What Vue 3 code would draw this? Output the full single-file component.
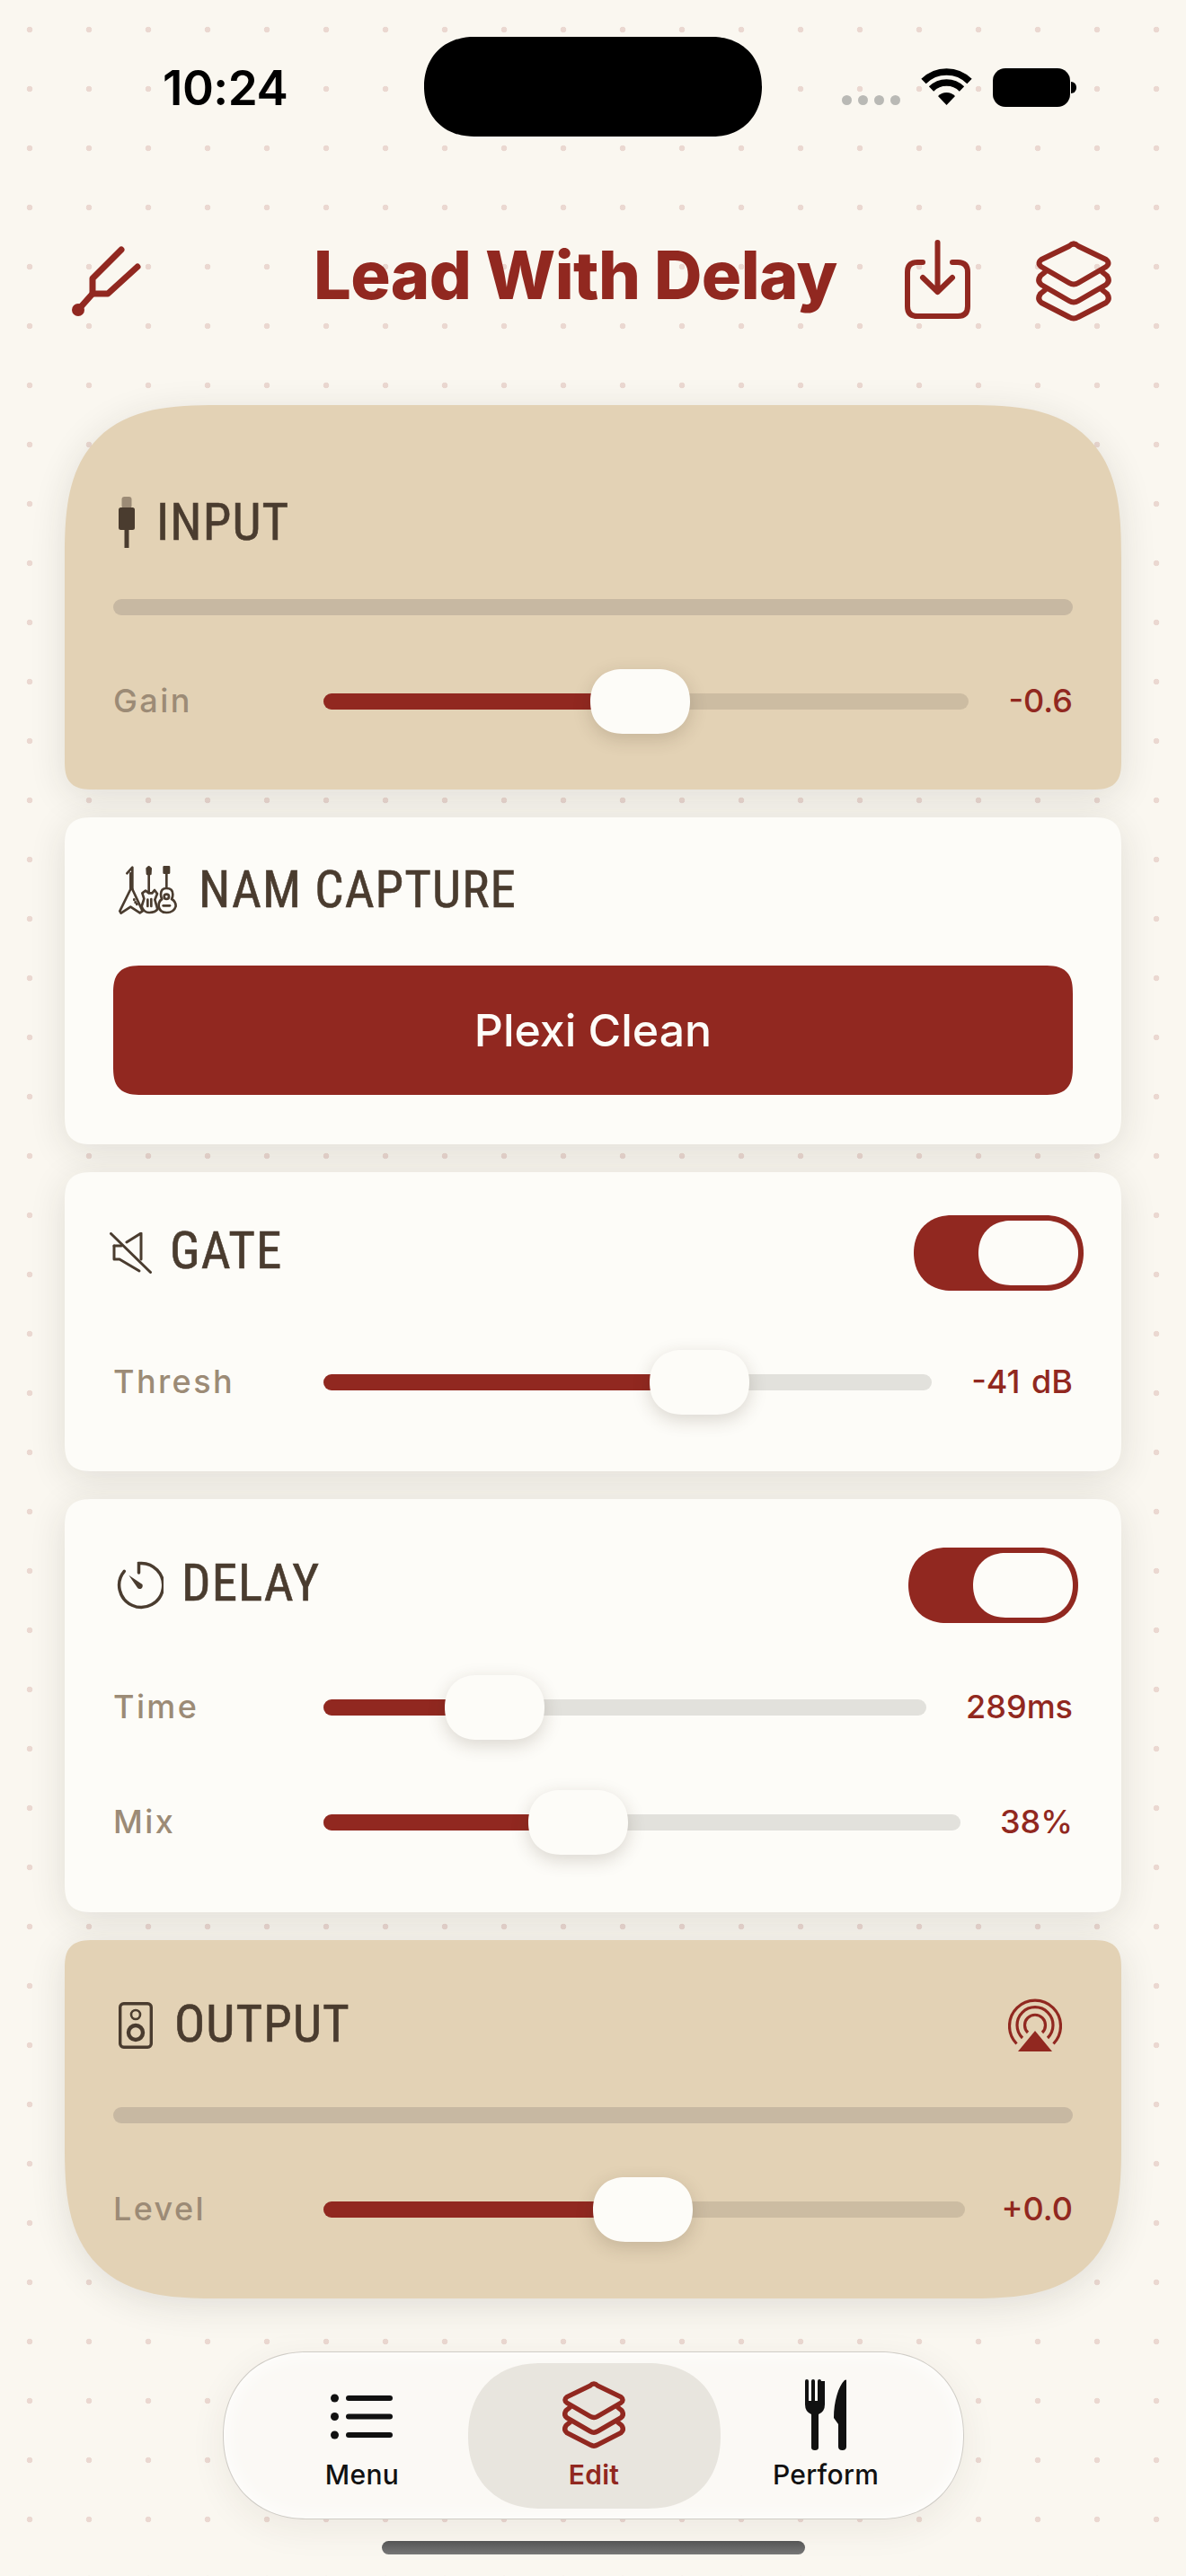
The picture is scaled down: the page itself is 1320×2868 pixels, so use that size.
<script setup>
const layers = [
  'M37 6Q42 1 47 6L78 21Q83 25 78 29L47 47Q42 50 37 47L6 29Q1 25 6 21Z',
  'M10 35L5 39Q1 45 6 49L37 67Q42 70 47 67L78 49Q83 45 79 39L74 35',
  'M10 55L5 59Q1 65 6 69L37 85Q42 88 47 85L78 69Q83 65 79 59L74 55'
]
const sliders = {
  gain: { label: 'Gain', value: '-0.6', thumb: 297 },
  thresh: { label: 'Thresh', value: '-41 dB', thumb: 363 },
  time: { label: 'Time', value: '289ms', thumb: 135 },
  mix: { label: 'Mix', value: '38%', thumb: 228 },
  level: { label: 'Level', value: '+0.0', thumb: 300 }
}
const thumbStyle = (s) => ({ left: s.thumb + 'px' })
const fillStyle = (s) => ({ width: s.thumb + 20 + 'px' })
</script>

<template>
  <div class="page">
    <div class="status">
      <span class="time">10:24</span>
      <div class="island"></div>
      <div class="signal"><i></i><i></i><i></i><i></i></div>
      <svg class="wifi" width="57" height="41" viewBox="0 0 57 41">
        <path d="M28.5 41L19 31A13.5 13.5 0 0 1 38 31Z" fill="#000" />
        <path d="M11.5 23A24 24 0 0 1 45.5 23" fill="none" stroke="#000" stroke-width="7.5" />
        <path d="M3 14.5A36 36 0 0 1 54 14.5" fill="none" stroke="#000" stroke-width="7.5" />
      </svg>
      <div class="battery"><b></b></div>
    </div>

    <header class="bar">
      <svg class="fork" width="120" height="120" viewBox="60 240 120 120" fill="none" stroke="#912820" stroke-width="7" stroke-linecap="round" stroke-linejoin="round">
        <path d="M87 345L103 327V310L135 278" />
        <path d="M103 327H120L153 297" />
        <circle cx="87" cy="345" r="7" fill="#912820" stroke="none" />
      </svg>
      <h1 class="title">Lead With Delay</h1>
      <svg class="export" width="73" height="89" viewBox="0 0 73 89" fill="none" stroke="#912820" stroke-width="6" stroke-linecap="round" stroke-linejoin="round">
        <path d="M20 25H14Q3 25 3 36V74Q3 85 14 85H59Q70 85 70 74V36Q70 25 59 25H53" />
        <path d="M36.500 3V58M20 42L36.500 58L53 42" />
      </svg>
      <svg class="stack" width="84" height="91" viewBox="0 0 84 91" fill="none" stroke="#912820" stroke-width="6" stroke-linecap="round" stroke-linejoin="round">
        <path v-for="d in layers" :key="d" :d="d" />
      </svg>
    </header>

    <main class="rack">
      <section class="card tan top input">
        <div class="head">
          <svg class="ic" width="18" height="58" viewBox="0 0 18 58">
            <rect x="3.500" y="0" width="11" height="13" rx="3" fill="#9c8b76" />
            <rect x="0" y="12" width="18" height="25" rx="2.500" fill="#4a3c2f" />
            <rect x="6.500" y="36" width="5" height="21" fill="#4a3c2f" />
          </svg>
          <h2 class="h-input">INPUT</h2>
        </div>
        <div class="meter"></div>
        <div class="row">
          <span class="lab">{{ sliders.gain.label }}</span>
          <div class="track"><div class="fill" :style="fillStyle(sliders.gain)"></div><div class="thumb" :style="thumbStyle(sliders.gain)"></div></div>
          <span class="val">{{ sliders.gain.value }}</span>
        </div>
      </section>

      <section class="card nam">
        <div class="head">
          <svg class="ic-g" width="65" height="54" viewBox="95 88 195 160" fill="none" stroke="#4a3c2f" stroke-width="8" stroke-linecap="round" stroke-linejoin="round">
            <path d="M123 112L141 92V165" />
            <path d="M135 112V165L99 238L103 245L135 224L166 244L175 238L141 165" />
            <path d="M147 199V201M151 208V210M156 214V216" />
            <path d="M190 96L196 91L202 96L201 114H191Z" fill="#4a3c2f" />
            <path d="M196 114V178M185 170L174 178L180 197L172 222Q178 243 198 243Q218 243 225 232L216 200L224 180L215 168L207 178H196Z" />
            <path d="M192 200V222M204 198V222" />
            <path d="M247 91H263V110H247Z" fill="#4a3c2f" />
            <path d="M255 110V162M255 162Q236 162 236 182Q236 192 240 198Q228 205 229 222Q232 243 255 243Q280 243 286 222Q286 205 272 198Q276 192 276 182Q276 162 255 162Z" />
            <circle cx="255" cy="190" r="8" />
            <path d="M244 220H266" />
          </svg>
          <h2 class="h-nam">NAM CAPTURE</h2>
        </div>
        <button class="capture">Plexi Clean</button>
      </section>

      <section class="card gate">
        <div class="head">
          <svg class="ic-m" width="47" height="46" viewBox="0 0 47 46" fill="none" stroke="#4a3c2f" stroke-width="3" stroke-linecap="round" stroke-linejoin="round">
            <path d="M1.500 1.500L45.500 44.500" />
            <path d="M5 15V30H11L33 43" />
            <path d="M5 15H13M19 11L35 1V30" />
          </svg>
          <h2 class="h-gate">GATE</h2>
          <div class="toggle t-gate"><div class="knob"></div></div>
        </div>
        <div class="row">
          <span class="lab">{{ sliders.thresh.label }}</span>
          <div class="track"><div class="fill" :style="fillStyle(sliders.thresh)"></div><div class="thumb" :style="thumbStyle(sliders.thresh)"></div></div>
          <span class="val v-thresh">{{ sliders.thresh.value }}</span>
        </div>
      </section>

      <section class="card delay">
        <div class="head">
          <svg class="ic-d" width="54" height="54" viewBox="0 0 54 54" fill="none" stroke="#4a3c2f" stroke-width="3.500" stroke-linecap="round">
            <path d="M26.500 13V2.600A24.500 24.500 0 1 1 10.300 11.300" />
            <path d="M15.300 15.700L30.500 26Q31.500 29.500 28.500 31Q26 31.500 24.800 29.500Z" fill="#4a3c2f" stroke="none" />
          </svg>
          <h2 class="h-delay">DELAY</h2>
          <div class="toggle t-delay"><div class="knob"></div></div>
        </div>
        <div class="row r-time">
          <span class="lab">{{ sliders.time.label }}</span>
          <div class="track"><div class="fill" :style="fillStyle(sliders.time)"></div><div class="thumb" :style="thumbStyle(sliders.time)"></div></div>
          <span class="val">{{ sliders.time.value }}</span>
        </div>
        <div class="row r-mix">
          <span class="lab">{{ sliders.mix.label }}</span>
          <div class="track"><div class="fill" :style="fillStyle(sliders.mix)"></div><div class="thumb" :style="thumbStyle(sliders.mix)"></div></div>
          <span class="val">{{ sliders.mix.value }}</span>
        </div>
      </section>

      <section class="card tan bottom output">
        <div class="head">
          <svg class="ic-s" width="38" height="52" viewBox="0 0 38 52" fill="none" stroke="#4a3c2f">
            <rect x="1.700" y="1.700" width="34.600" height="48.600" rx="4" stroke-width="3.400" />
            <circle cx="19" cy="14" r="5" stroke-width="2.600" />
            <circle cx="19" cy="34" r="8" stroke-width="4.400" />
          </svg>
          <h2 class="h-output">OUTPUT</h2>
          <svg class="ic-a" width="60" height="60" viewBox="0 0 60 60" fill="none" stroke="#912820" stroke-width="3.200">
            <path d="M9.500 50.500A28.500 28.500 0 1 1 50.500 50.500" />
            <path d="M16 44A20 20 0 1 1 44 44" />
            <path d="M22 38A11.500 11.500 0 1 1 38 38" />
            <path d="M30 36L49 59H11Z" fill="#912820" stroke="none" />
          </svg>
        </div>
        <div class="meter"></div>
        <div class="row">
          <span class="lab">{{ sliders.level.label }}</span>
          <div class="track"><div class="fill" :style="fillStyle(sliders.level)"></div><div class="thumb" :style="thumbStyle(sliders.level)"></div></div>
          <span class="val v-level">{{ sliders.level.value }}</span>
        </div>
      </section>
    </main>

    <nav class="tabs">
      <div class="tab">
        <svg class="t-ic" width="70" height="80" viewBox="0 0 70 80" fill="#111">
          <circle cx="4.500" cy="21" r="4.500" /><circle cx="4.500" cy="41.500" r="4.500" /><circle cx="4.500" cy="62" r="4.500" />
          <rect x="17" y="18" width="52" height="6" rx="3" /><rect x="17" y="38.500" width="52" height="6" rx="3" /><rect x="17" y="59" width="52" height="6" rx="3" />
        </svg>
        <span>Menu</span>
      </div>
      <div class="tab active">
        <svg class="t-ic" width="70" height="80" viewBox="0 0 84 91" fill="none" stroke="#912820" stroke-width="6.500" stroke-linecap="round" stroke-linejoin="round">
          <path v-for="d in layers" :key="d" :d="d" />
        </svg>
        <span>Edit</span>
      </div>
      <div class="tab">
        <svg class="t-ic" width="46" height="80" viewBox="0 0 46 80" fill="#111">
          <path d="M0 2Q0 0 2 0Q4 0 4 2V24H7V2Q7 0 9 0Q11 0 11 2V24H14V2Q14 0 16 0Q18 0 18 2L22 2V28Q22 36 15 39V76Q15 79 11 79Q7 79 7 76V39Q0 36 0 28Z" />
          <path d="M46 1Q46 0 44 1C37 8 32 25 32 43L37 50V75Q37 79 41.500 79Q46 79 46 75Z" />
        </svg>
        <span>Perform</span>
      </div>
    </nav>
    <div class="home"></div>
  </div>
</template>

<style>
html, body { margin: 0; background: #faf7f0; }
</style>

<style scoped>
.page {
  width: 1320px;
  height: 2868px;
  overflow: hidden;
  background-color: #faf7f0;
  background-image: radial-gradient(circle at 33px 33px, rgba(145, 40, 32, 0.15) 3px, transparent 3.6px);
  background-size: 66px 66px;
  font-family: Inter, "Liberation Sans", sans-serif;
}
.status { display: flex; align-items: flex-start; padding-top: 41px; height: 111px; }
.time { width: 291px; margin-left: 181px; margin-top: 26px; font-size: 53px; line-height: 62px; font-weight: 600; color: #000; letter-spacing: -0.5px; }
.island { width: 376px; height: 111px; border-radius: 56px; background: #000; corner-shape: superellipse(1.1); }
.signal { display: flex; gap: 7px; margin: 65px 0 0 89px; }
.signal i { width: 11px; height: 11px; border-radius: 50%; background: #b9b9b5; }
.wifi { margin: 35px 0 0 23px; }
.battery { position: relative; width: 86px; height: 43px; margin: 35px 0 0 23px; border-radius: 14px; background: #000; }
.battery b { position: absolute; left: 87px; top: 15px; width: 6px; height: 13px; border-radius: 0 6px 6px 0; background: #000; }

.bar { display: flex; align-items: flex-start; height: 120px; margin-top: 88px; padding-left: 60px; }
.title { margin: 6px 0 0 169px; width: 579px; font-size: 74px; line-height: 120px; font-weight: 800; color: #912820; white-space: nowrap; letter-spacing: -0.6px; }
.export { margin: 27px 0 0 79px; }
.stack { margin: 28px 0 0 73px; }

.rack { display: flex; flex-direction: column; gap: 31px; margin: 31px 36px 0; padding: 60px 36px 50px; overflow: hidden; }
.card { position: relative; padding: 0 54px; border-radius: 32px; corner-shape: superellipse(1.5); background: #fdfcf8; box-shadow: 0 8px 40px rgba(40, 38, 30, 0.12); box-sizing: border-box; }
.tan { background: #e3d2b5; }
.top { border-radius: 170px 170px 32px 32px; }
.bottom { border-radius: 32px 32px 170px 170px; }
.input { height: 428px; padding-top: 101px; }
.nam { height: 364px; padding-top: 51px; }
.gate { height: 333px; padding-top: 48px; }
.delay { height: 460px; padding-top: 54px; }
.output { height: 399px; padding-top: 65px; }

.head { display: flex; align-items: center; height: 60px; }
.gate .head, .delay .head { height: 84px; }
h2 { margin: 0; font-family: "Liberation Sans Narrow", "Roboto Condensed", Roboto, sans-serif; font-size: 57px; line-height: 60px; font-weight: 400; letter-spacing: 1.1px; -webkit-text-stroke: 0.6px #4a3c2f; color: #4a3c2f; }
.ic { margin-left: 6px; }
.h-input { margin-left: 24px; }
.ic-g { margin-left: 6px; }
.h-nam { margin-left: 24px; }
.ic-m { margin-left: -4px; }
.h-gate { margin: -5px 0 0 20px; }
.ic-d { margin-left: 2px; }
.h-delay { margin: -5px 0 0 20px; }
.ic-s { margin-left: 6px; }
.h-output { margin: -2px 0 0 24px; }
.ic-a { margin-left: auto; margin-right: 12px; }
.toggle { margin-left: auto; width: 189px; height: 84px; padding: 6px; border-radius: 42px; corner-shape: superellipse(1.1); background: #912820; box-sizing: border-box; display: flex; justify-content: flex-end; }
.t-gate { margin-right: -12px; }
.t-delay { margin-right: -6px; }
.knob { width: 111px; height: 72px; border-radius: 36px; corner-shape: superellipse(1.1); background: #fdfcf8; }

.meter { height: 18px; margin-top: 55px; border-radius: 9px; background: #c7b8a2; }
.output .meter { margin-top: 61px; }
.row { display: flex; align-items: center; gap: 44px; height: 72px; margin-top: 60px; }
.gate .row { margin-top: 66px; }
.r-time { margin-top: 58px; }
.r-mix { margin-top: 56px; }
.lab { width: 190px; margin-top: -3px; font-size: 36px; font-weight: 500; letter-spacing: 2.4px; color: #9c8b76; }
.track { position: relative; flex: 1; height: 18px; border-radius: 9px; background: #e2e1dc; }
.tan .track { background: #ccbca2; }
.fill { height: 100%; border-radius: 9px 0 0 9px; background: #912820; }
.thumb { position: absolute; top: -27px; width: 111px; height: 72px; border-radius: 36px; corner-shape: superellipse(1.15); background: #fdfcf8; box-shadow: 0 6px 20px rgba(60, 45, 30, 0.18); }
.val { margin-top: -3px; font-size: 36px; font-weight: 550; color: #912820; }
.v-thresh { word-spacing: 3px; }
.v-level { margin-left: -3px; }

.capture { display: block; width: 100%; height: 144px; margin-top: 54px; border: 0; border-radius: 32px; corner-shape: superellipse(1.5); background: #912820; color: #fdfcf8; font-family: inherit; font-size: 50px; font-weight: 500; }

.tabs { display: grid; grid-template-columns: repeat(3, 258px); width: 825px; height: 187px; box-sizing: border-box; margin: 9px 0 0 247.500px; padding: 12px 25.500px; border: 1px solid #cfccc6; border-radius: 93px; corner-shape: superellipse(1.1); background: #fbf9f5; box-shadow: inset 0 0 24px #fff, 0 10px 40px rgba(60, 45, 30, 0.07); }
.tab { display: flex; flex-direction: column; align-items: center; height: 162px; padding-top: 18px; box-sizing: border-box; font-size: 30px; font-weight: 500; line-height: 34px; letter-spacing: 0.3px; color: #111; }
.tab span { margin-top: 9px; }
.active { margin: 0 -11.500px; border-radius: 81px; corner-shape: superellipse(1.15); background: #e8e5de; color: #912820; font-weight: 600; }
.home { width: 471px; height: 15px; margin: 24px 0 0 425px; border-radius: 8px; background: linear-gradient(#555, #777); }
</style>
